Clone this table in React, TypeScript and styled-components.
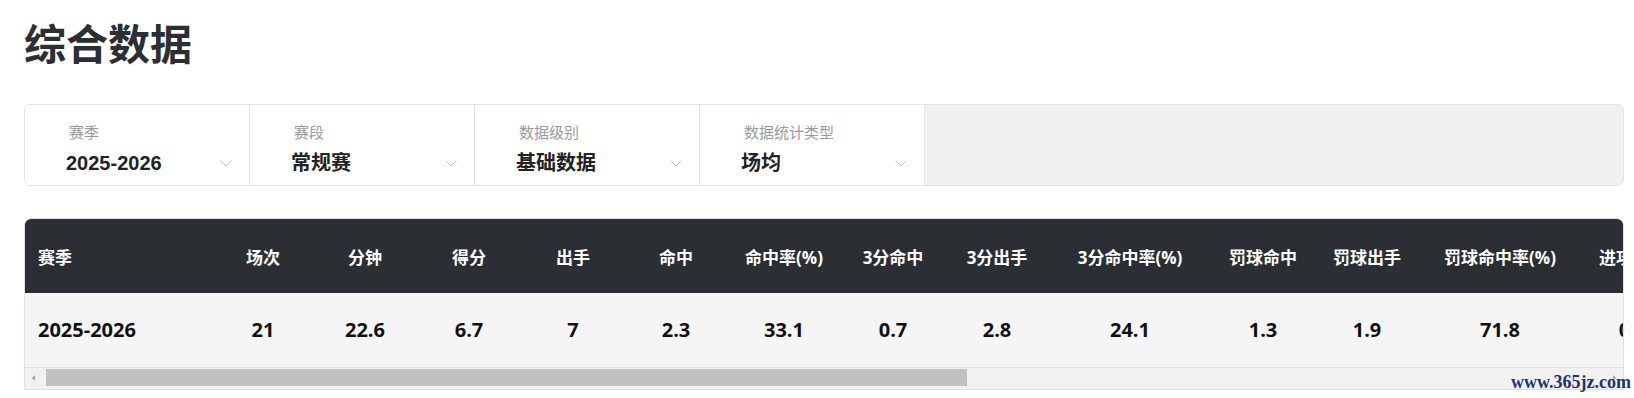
import React from "react";
import styled, { createGlobalStyle } from "styled-components";

const GlobalStyle = createGlobalStyle`
  html, body { margin: 0; padding: 0; background: #ffffff; }
  body { font-family: "Liberation Sans", "Noto Sans CJK SC", sans-serif; }
  * { box-sizing: border-box; }
`;

const Page = styled.div`
  position: relative;
  width: 1634px;
  height: 398px;
  overflow: hidden;
  padding: 21px 10px 0 24px;
`;

const Title = styled.h1`
  margin: 0;
  font-family: "Noto Sans CJK SC", sans-serif;
  font-size: 42px;
  line-height: 42px;
  font-weight: 700;
  color: #2b2f33;
`;

const FilterBar = styled.div`
  display: flex;
  margin-top: 41px;
  width: 1600px;
  height: 82px;
  border: 1px solid #e4e4e4;
  border-radius: 6px;
  overflow: hidden;
`;

const FilterCell = styled.div`
  width: 225px;
  flex: none;
  background: #ffffff;
  border-right: 1px solid #e4e4e4;
  padding: 17px 17px 0 41px;
`;

const FilterLabel = styled.div`
  margin-left: 3px;
  font-family: "Noto Sans CJK SC", sans-serif;
  font-size: 15px;
  line-height: 20px;
  color: #9a9a9a;
`;

const FilterValueRow = styled.div`
  display: flex;
  align-items: center;
  justify-content: space-between;
  margin-top: 7px;
  height: 28px;
`;

const FilterValue = styled.span`
  font-family: "Liberation Sans", "Noto Sans CJK SC", sans-serif;
  font-size: 20px;
  line-height: 28px;
  font-weight: 700;
  color: #222222;
`;

const FilterFill = styled.div`
  flex: 1;
  background: #f0f0f0;
`;

const TableCard = styled.div`
  margin-top: 32px;
  width: 1600px;
  border: 1px solid #dee2e6;
  border-radius: 7px 7px 0 0;
  overflow: hidden;
`;

const TableScroll = styled.div`
  overflow: hidden;
  width: 100%;
`;

const StatsTable = styled.table`
  border-collapse: collapse;
  table-layout: fixed;
  font-family: "Open Sans", "Noto Sans CJK SC", sans-serif;
`;

const HeadCell = styled.th<{ $first?: boolean }>`
  height: 74px;
  padding: 0 ${(p) => (p.$first ? "0 0 13px" : "0")};
  background: #2b2f33;
  color: #ffffff;
  font-size: 17px;
  font-weight: 700;
  white-space: nowrap;
  text-align: ${(p) => (p.$first ? "left" : "center")};
`;

const DataCell = styled.td<{ $first?: boolean }>`
  height: 74px;
  padding: 0 ${(p) => (p.$first ? "0 0 13px" : "0")};
  background: #f5f5f5;
  border-bottom: 1px solid #dde3e6;
  color: #111111;
  font-size: 20px;
  font-weight: 700;
  white-space: nowrap;
  text-align: ${(p) => (p.$first ? "left" : "center")};
`;

const ScrollBar = styled.div`
  display: flex;
  align-items: center;
  height: 21px;
  background: #f1f1f1;
  padding: 1px 0 2px;
`;

const ArrowButton = styled.div<{ $dir: "left" | "right" }>`
  width: 17px;
  height: 17px;
  flex: none;
  display: flex;
  align-items: center;
  justify-content: center;
  &::before {
    content: "";
    border-top: 3px solid transparent;
    border-bottom: 3px solid transparent;
    ${(p) =>
      p.$dir === "left"
        ? "border-right: 3px solid #a3a3a3;"
        : "border-left: 3px solid #a3a3a3;"}
  }
`;

const Track = styled.div`
  flex: 1;
  height: 17px;
  display: flex;
  padding-left: 4px;
`;

const Thumb = styled.div`
  height: 17px;
  background: #c1c1c1;
`;

const Watermark = styled.div`
  position: absolute;
  left: 1511px;
  top: 372px;
  font-family: "Liberation Serif", serif;
  font-size: 18px;
  font-weight: 700;
  color: #1f3373;
  white-space: nowrap;
`;

const Chevron = () => (
  <svg width="12" height="7" viewBox="0 0 12 7">
    <polyline points="0.5,0.5 6,6 11.5,0.5" fill="none" stroke="#c0c4cc" strokeWidth="1" />
  </svg>
);

const filters = [
  { label: "赛季", value: "2025-2026" },
  { label: "赛段", value: "常规赛" },
  { label: "数据级别", value: "基础数据" },
  { label: "数据统计类型", value: "场均" },
];

const columns: { title: string; width: number; value: string }[] = [
  { title: "赛季", width: 188, value: "2025-2026" },
  { title: "场次", width: 100, value: "21" },
  { title: "分钟", width: 104, value: "22.6" },
  { title: "得分", width: 104, value: "6.7" },
  { title: "出手", width: 104, value: "7" },
  { title: "命中", width: 102, value: "2.3" },
  { title: "命中率(%)", width: 114, value: "33.1" },
  { title: "3分命中", width: 104, value: "0.7" },
  { title: "3分出手", width: 104, value: "2.8" },
  { title: "3分命中率(%)", width: 162, value: "24.1" },
  { title: "罚球命中", width: 104, value: "1.3" },
  { title: "罚球出手", width: 104, value: "1.9" },
  { title: "罚球命中率(%)", width: 162, value: "71.8" },
  { title: "进攻篮板", width: 104, value: "0.4" },
];

const tableWidth = columns.reduce((s, c) => s + c.width, 0);

export default function App() {
  return (
    <>
      <GlobalStyle />
      <Page>
        <Title>综合数据</Title>
        <FilterBar>
          {filters.map((f) => (
            <FilterCell key={f.label}>
              <FilterLabel>{f.label}</FilterLabel>
              <FilterValueRow>
                <FilterValue>{f.value}</FilterValue>
                <Chevron />
              </FilterValueRow>
            </FilterCell>
          ))}
          <FilterFill />
        </FilterBar>
        <TableCard>
          <TableScroll>
            <StatsTable style={{ width: tableWidth }}>
              <colgroup>
                {columns.map((c) => (
                  <col key={c.title} style={{ width: c.width }} />
                ))}
              </colgroup>
              <thead>
                <tr>
                  {columns.map((c, i) => (
                    <HeadCell key={c.title} $first={i === 0}>
                      {c.title}
                    </HeadCell>
                  ))}
                </tr>
              </thead>
              <tbody>
                <tr>
                  {columns.map((c, i) => (
                    <DataCell key={c.title} $first={i === 0}>
                      {c.value}
                    </DataCell>
                  ))}
                </tr>
              </tbody>
            </StatsTable>
          </TableScroll>
          <ScrollBar>
            <ArrowButton $dir="left" />
            <Track>
              <Thumb style={{ width: 921 }} />
            </Track>
            <ArrowButton $dir="right" />
          </ScrollBar>
        </TableCard>
        <Watermark>www.365jz.com</Watermark>
      </Page>
    </>
  );
}
